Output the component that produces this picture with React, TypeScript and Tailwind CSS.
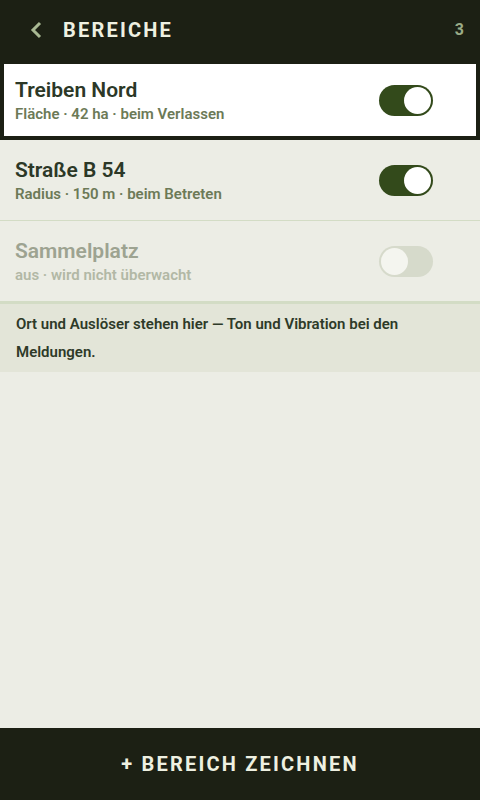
const areas = [
  { id: 1, name: "Treiben Nord", meta: "Fläche · 42 ha · beim Verlassen", on: true, selected: true },
  { id: 2, name: "Straße B 54", meta: "Radius · 150 m · beim Betreten", on: true, selected: false },
  { id: 3, name: "Sammelplatz", meta: "aus · wird nicht überwacht", on: false, selected: false },
];

const Toggle = ({ on }: { on: boolean }) => (
  <div
    className={`w-[54px] h-[31px] rounded-full flex items-center px-[2px] ${
      on ? "bg-[#334a1b] justify-end" : "bg-[#d6dacb] justify-start"
    }`}
  >
    <div className={`w-[27px] h-[27px] rounded-full ${on ? "bg-white" : "bg-[#f4f5ef]"}`} />
  </div>
);

export default function App() {
  return (
    <div className="h-[800px] w-[480px] flex flex-col bg-[#ecede5] font-['Roboto',sans-serif]">
      <header className="h-[60px] shrink-0 bg-[#1c2014] flex items-center pl-[28px] pr-[16px]">
        <svg width="16" height="20" viewBox="0 0 16 20" className="mr-[19px]">
          <path d="M12 3 L5 10 L12 17" fill="none" stroke="#a9b993" strokeWidth="3" />
        </svg>
        <h1 className="text-[20px] font-bold tracking-[2.2px] text-[#eef0e1]">BEREICHE</h1>
        <span className="ml-auto text-[16px] font-bold text-[#9aab86]">3</span>
      </header>

      <main className="flex-1">
        {areas.map((a) => (
          <div
            key={a.id}
            className={`flex items-center ${
              a.selected
                ? "h-[80px] bg-white border-4 border-[#1c2014] pl-[11px] pr-[43px]"
                : "h-[81px] border-b border-[#d3dcc5] pl-[15px] pr-[47px]"
            }`}
          >
            <div className="flex-1 pt-[2px]">
              <div
                className={`text-[21px] font-semibold leading-[26px] ${
                  a.on ? "text-[#2c3827]" : "text-[#9da391]"
                }`}
              >
                {a.name}
              </div>
              <div
                className={`text-[15px] font-semibold leading-[22px] ${
                  a.on ? "text-[#6c7a57]" : "text-[#b2b8a5]"
                }`}
              >
                {a.meta}
              </div>
            </div>
            <Toggle on={a.on} />
          </div>
        ))}
        <div className="border-t-2 border-[#d3dcc5] bg-[#e3e5d8] px-[16px] py-[6px]">
          <p className="text-[15px] font-semibold leading-[28px] text-[#2e3a28]">
            Ort und Auslöser stehen hier — Ton und Vibration bei den Meldungen.
          </p>
        </div>
      </main>

      <footer className="h-[72px] shrink-0 bg-[#1c2014] flex items-center justify-center">
        <span className="text-[20px] font-bold tracking-[2.2px] text-[#eef0e1]">+ BEREICH ZEICHNEN</span>
      </footer>
    </div>
  );
}
